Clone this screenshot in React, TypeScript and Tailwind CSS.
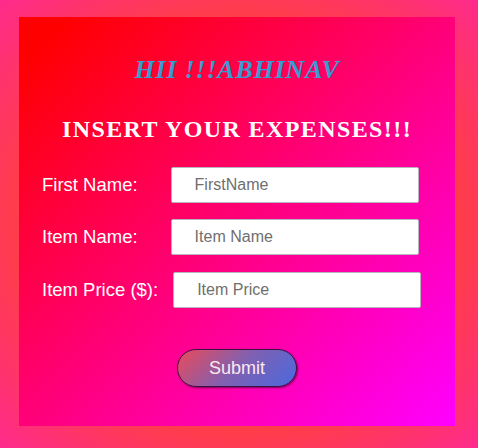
export default function App() {
  const rows = [
    { label: "First Name:", placeholder: "FirstName", ml: "ml-[33px]" },
    { label: "Item Name:", placeholder: "Item Name", ml: "ml-[33px]" },
    { label: "Item Price ($):", placeholder: "Item Price", ml: "ml-[15px]" },
  ]

  return (
    <div className="w-[478px] h-[448px] pt-[17px] pl-[19px] bg-[radial-gradient(ellipse_at_center,#ff4040_60%,#ff2a8c_100%)]">
      <div className="w-[436px] h-[409px] bg-[linear-gradient(to_bottom_right,#ff0000_5%,#ff00ff_100%)] flex flex-col items-center">
        <h1 className="mt-[37px] text-[26px] leading-[32px] font-bold italic tracking-[0.8px] text-[#3a9bd0] font-['Liberation_Serif',serif]">
          HII !!!ABHINAV
        </h1>
        <h2 className="mt-[28px] text-[24px] leading-[30px] font-bold tracking-[1.4px] text-white font-['Liberation_Serif',serif]">
          INSERT YOUR EXPENSES!!!
        </h2>
        <div className="self-start ml-[23px] mt-[23px] flex flex-col gap-[16px] font-['Liberation_Sans',Arial,sans-serif]">
          {rows.map((r, i) => (
            <div key={i} className={`flex items-center ${i === 2 ? "mt-[1px]" : ""}`}>
              <span className="text-[18.5px] text-white leading-[22px]">{r.label}</span>
              <input
                placeholder={r.placeholder}
                className={`${r.ml} w-[248px] h-[36px] bg-white rounded-[2px] border border-[#b9b3c0] pl-[23px] text-[16px] text-[#555] placeholder:text-[#6f6f6f] outline-none`}
              />
            </div>
          ))}
        </div>
        <button className="mt-[41px] w-[120px] h-[38px] rounded-full border border-[#3a1040] bg-[linear-gradient(135deg,#ec4a5a_0%,#8060b0_50%,#4a6ae0_100%)] shadow-[1px_1px_2px_rgba(40,0,40,0.6)] text-[18px] text-[#fde8f0] font-['Liberation_Sans',Arial,sans-serif]">
          Submit
        </button>
      </div>
    </div>
  )
}
